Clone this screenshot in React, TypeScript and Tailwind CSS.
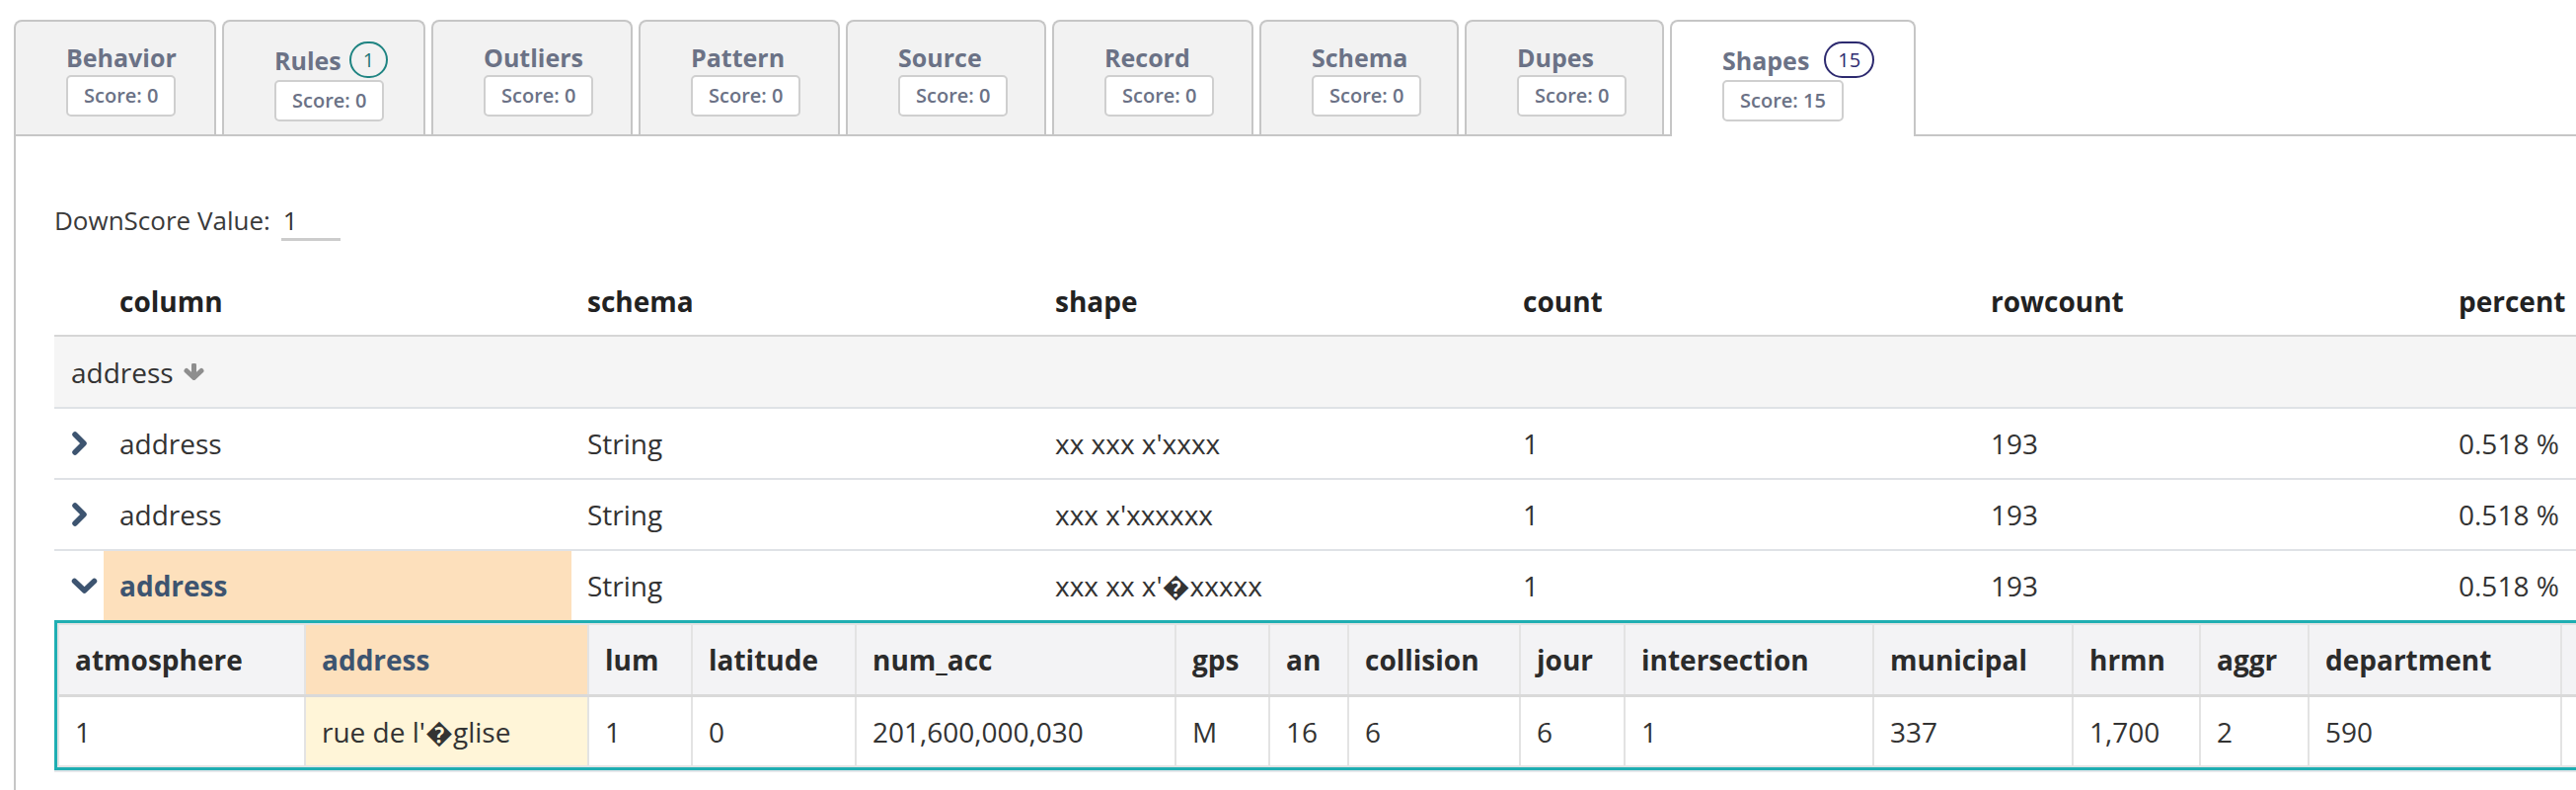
import React from "react";

type Tab = {
  label: string;
  w: string;
  score: string;
  badge?: string;
  badgeCls?: string;
  active?: boolean;
};

const tabs: Tab[] = [
  { label: "Behavior", w: "w-[205px]", score: "0" },
  { label: "Rules", w: "w-[206px]", score: "0", badge: "1", badgeCls: "ml-[8px] border-[#1f8482] text-[#1f7775]" },
  { label: "Outliers", w: "w-[204px]", score: "0" },
  { label: "Pattern", w: "w-[204px]", score: "0" },
  { label: "Source", w: "w-[203px]", score: "0" },
  { label: "Record", w: "w-[204px]", score: "0" },
  { label: "Schema", w: "w-[202px]", score: "0" },
  { label: "Dupes", w: "w-[202px]", score: "0" },
  { label: "Shapes", w: "w-[249px]", score: "15", badge: "15", badgeCls: "ml-[15px] border-[#2d2a6f] text-[#2d2a6f]", active: true },
];

function TabItem({ t }: { t: Tab }) {
  const base = t.active
    ? "relative h-[118px] -mb-[2px] bg-white"
    : "h-[116px] bg-[#f2f2f2]";
  return (
    <div
      className={`${t.w} ${base} border-2 border-b-0 border-[#c6c6c6] rounded-t-[8px] pl-[51px] pt-[20px] flex flex-col items-start shrink-0`}
    >
      <div className={`flex items-center ${t.badge ? "h-[37px]" : "h-[32px]"}`}>
        <span className="text-[25px] font-bold leading-[32px] text-[#6b7286]">{t.label}</span>
        {t.badge && (
          <span
            className={`${t.badgeCls} h-[37px] px-[12px] rounded-full border-2 flex items-center justify-center text-[20px] leading-none`}
          >
            {t.badge}
          </span>
        )}
      </div>
      <div className="mt-[2px] h-[42px] border-2 border-[#cfcfcf] rounded-[5px] bg-white px-[16px] flex items-center text-[20px] font-semibold text-[#6b7286]">
        Score: {t.score}
      </div>
    </div>
  );
}

function ChevronRight() {
  return (
    <svg width="18" height="24" viewBox="0 0 18 24">
      <polyline points="4,3 13,12 4,21" fill="none" stroke="#3d5470" strokeWidth="5.5" strokeLinejoin="round" strokeLinecap="round" />
    </svg>
  );
}

function ChevronDown() {
  return (
    <svg width="27" height="17" viewBox="0 0 27 17">
      <polyline points="3.5,3.5 13.5,13 23.5,3.5" fill="none" stroke="#3d5470" strokeWidth="5.5" strokeLinejoin="round" strokeLinecap="round" />
    </svg>
  );
}

function ArrowDown() {
  return (
    <svg width="23" height="17" viewBox="0 0 23 17">
      <line x1="11.5" y1="2" x2="11.5" y2="13" stroke="#8e8e8e" strokeWidth="5" strokeLinecap="round" />
      <polyline points="4,7.5 11.5,14.5 19,7.5" fill="none" stroke="#8e8e8e" strokeWidth="5" strokeLinejoin="round" strokeLinecap="round" />
    </svg>
  );
}

const cols = ["column", "schema", "shape", "count", "rowcount", "percent"];

const rows = [
  { shape: "xx xxx x'xxxx", open: false },
  { shape: "xxx x'xxxxxx", open: false },
  { shape: "xxx xx x'\uFFFDxxxxx", open: true },
];

const nested: { name: string; w: string; val: string; hl?: boolean; first?: boolean }[] = [
  { name: "atmosphere", w: "w-[248px]", val: "1", first: true },
  { name: "address", w: "w-[287px]", val: "rue de l'\uFFFDglise", hl: true },
  { name: "lum", w: "w-[105px]", val: "1" },
  { name: "latitude", w: "w-[166px]", val: "0" },
  { name: "num_acc", w: "w-[324px]", val: "201,600,000,030" },
  { name: "gps", w: "w-[95px]", val: "M" },
  { name: "an", w: "w-[80px]", val: "16" },
  { name: "collision", w: "w-[174px]", val: "6" },
  { name: "jour", w: "w-[106px]", val: "6" },
  { name: "intersection", w: "w-[252px]", val: "1" },
  { name: "municipal", w: "w-[202px]", val: "337" },
  { name: "hrmn", w: "w-[129px]", val: "1,700" },
  { name: "aggr", w: "w-[110px]", val: "2" },
  { name: "department", w: "w-[256px]", val: "590" },
  { name: "", w: "w-[200px]", val: "" },
];

export default function App() {
  return (
    <div className="w-[2610px] h-[800px] overflow-hidden bg-white font-['Open_Sans',sans-serif] text-[#333333]">
      <div className="ml-[14px]">
        {/* Tabs */}
        <div className="flex items-start gap-[6px] pt-[20px] border-b-2 border-[#c6c6c6]">
          {tabs.map((t) => (
            <TabItem key={t.label} t={t} />
          ))}
        </div>

        {/* Panel */}
        <div className="h-[662px] border-l-2 border-[#c6c6c6] pl-[39px] pt-[67px]">
          <div className="flex items-start h-[39px]">
            <span className="text-[26px] leading-[36px] text-[#3a3a3a]">DownScore Value:</span>
            <div className="ml-[11px] w-[60px] h-[39px] border-b-[3px] border-[#cccccc] pl-[2px] text-[26px] leading-[36px] text-[#333333]">
              1
            </div>
          </div>

          {/* Main table */}
          <div className="mt-[27px] w-[2894px]">
            <div className="flex h-[70px] border-b-2 border-[#d6d6d6] items-center">
              <div className="w-[50px] shrink-0" />
              {cols.map((c) => (
                <div key={c} className="w-[474px] shrink-0 pl-[16px] text-[28px] font-bold text-[#222222]">
                  {c}
                </div>
              ))}
            </div>

            <div className="flex h-[71px] items-center bg-[#f5f5f5] pl-[17px] gap-[9px]">
              <span className="text-[28px]">address</span>
              <ArrowDown />
            </div>

            {rows.map((r, i) => (
              <div key={i} className="flex h-[72px] border-t-2 border-[#dfe2e6]">
                <div className="w-[50px] shrink-0 flex items-center pl-[17px]">
                  {r.open ? <ChevronDown /> : <ChevronRight />}
                </div>
                <div
                  className={`w-[474px] shrink-0 pl-[16px] flex items-center text-[28px] ${
                    r.open ? "bg-[#fde0bc] font-bold text-[#3d5470]" : ""
                  }`}
                >
                  address
                </div>
                <div className="w-[474px] shrink-0 pl-[16px] flex items-center text-[28px]">String</div>
                <div className="w-[474px] shrink-0 pl-[16px] flex items-center text-[28px]">{r.shape}</div>
                <div className="w-[474px] shrink-0 pl-[16px] flex items-center text-[28px]">1</div>
                <div className="w-[474px] shrink-0 pl-[16px] flex items-center text-[28px]">193</div>
                <div className="w-[474px] shrink-0 pl-[16px] flex items-center text-[28px]">0.518 %</div>
              </div>
            ))}

            {/* Nested */}
            <div className="border-b-2 border-[#e5e7eb] w-max">
              <div className="w-max border-[3px] border-[#1faeb2]">
                <div className="w-max border-2 border-[#e3e3e3]">
                  <div className="flex h-[73px] border-b-[3px] border-[#d9d9d9] bg-[#f3f3f5]">
                    {nested.map((c, i) => (
                      <div
                        key={i}
                        className={`${c.w} shrink-0 flex items-center text-[28px] font-bold ${
                          c.first ? "pl-[16px]" : "border-l-2 border-[#e3e3e3] pl-[16px]"
                        } ${c.hl ? "bg-[#fde0bc] text-[#3d5470]" : "text-[#2b2b2b]"}`}
                      >
                        {c.name}
                      </div>
                    ))}
                  </div>
                  <div className="flex h-[69px]">
                    {nested.map((c, i) => (
                      <div
                        key={i}
                        className={`${c.w} shrink-0 flex items-center text-[28px] ${
                          c.first ? "pl-[16px]" : "border-l-2 border-[#e3e3e3] pl-[16px]"
                        } ${c.hl ? "bg-[#fff5d8]" : ""}`}
                      >
                        {c.val}
                      </div>
                    ))}
                  </div>
                </div>
              </div>
            </div>
          </div>
        </div>
      </div>
    </div>
  );
}
